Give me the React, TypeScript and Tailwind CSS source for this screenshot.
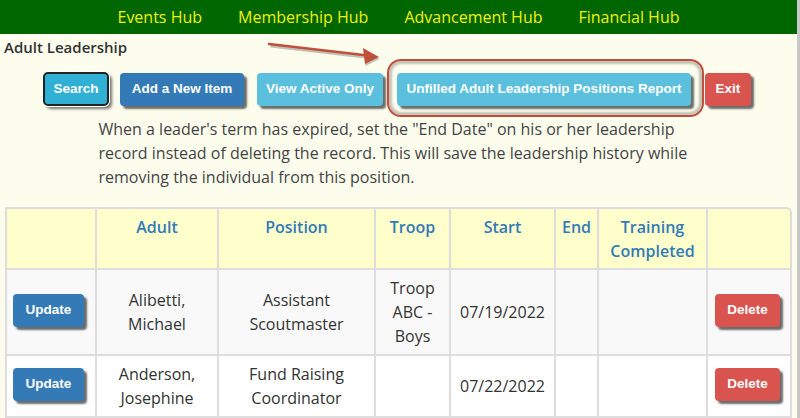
import React from "react";

const font = { fontFamily: '"Open Sans", "Liberation Sans", Arial, sans-serif' };
const btnFont = { fontFamily: '"Liberation Sans", Arial, sans-serif' };

function Btn({ children, className }: { children: React.ReactNode; className: string }) {
  return (
    <button
      style={btnFont}
      className={`h-[33px] shrink-0 rounded-[4px] px-0 text-center text-[13.5px] font-bold text-white shadow-[3px_3px_2px_rgba(60,60,60,0.75)] ${className}`}
    >
      {children}
    </button>
  );
}

const rows = [
  { adult: ["Alibetti,", "Michael"], pos: ["Assistant", "Scoutmaster"], troop: ["Troop", "ABC -", "Boys"], start: "07/19/2022", bg: "bg-[#f9f9f9]" },
  { adult: ["Anderson,", "Josephine"], pos: ["Fund Raising", "Coordinator"], troop: [], start: "07/22/2022", bg: "bg-white" },
];

export default function App() {
  return (
    <div className="flex h-[418px] w-[800px] overflow-hidden bg-[#fdfdee]" style={font}>
      <div className="relative flex w-[797px] flex-col">
        <div className="flex h-[34px] items-center justify-center gap-[36px] bg-[#006600] text-[16px] text-[#f2f200]">
          <span>Events Hub</span>
          <span>Membership Hub</span>
          <span>Advancement Hub</span>
          <span>Financial Hub</span>
        </div>
        <div className="px-[4px] pt-[3px] text-[15px] font-semibold leading-[21px] text-[#333]">Adult Leadership</div>
        <div className="mt-[14px] flex items-center pl-[43px]">
          <button
            style={btnFont}
            className="h-[34px] w-[66px] shrink-0 rounded-[5px] border-2 border-[#222] bg-[#31b0d5] text-[13.5px] font-bold text-white shadow-[0_0_0_1px_#fff,3px_3px_3px_rgba(60,60,60,0.7)]"
          >
            Search
          </button>
          <Btn className="ml-[11px] w-[124px] bg-[#337ab7]">Add a New Item</Btn>
          <Btn className="ml-[13px] w-[126px] bg-[#5bc0de]">View Active Only</Btn>
          <Btn className="ml-[14px] w-[294px] bg-[#5bc0de]">Unfilled Adult Leadership Positions Report</Btn>
          <Btn className="ml-[14px] w-[46px] bg-[#d9534f]">Exit</Btn>
        </div>
        <p className="mx-auto mt-[11px] w-[600px] text-[16px] leading-[24px] text-[#444]">
          When a leader's term has expired, set the "End Date" on his or her leadership record instead of deleting the
          record. This will save the leadership history while removing the individual from this position.
        </p>

        <div className="ml-[5px] mt-[18px] w-[787px]">
          <table className="w-[787px] table-fixed border-separate border-spacing-0 text-[16px] leading-[24px]">
            <colgroup>
              <col className="w-[90px]" />
              <col className="w-[122px]" />
              <col className="w-[157px]" />
              <col className="w-[75px]" />
              <col className="w-[105px]" />
              <col className="w-[43px]" />
              <col className="w-[109px]" />
              <col className="w-[86px]" />
            </colgroup>
            <thead>
              <tr className="bg-[#ffffcc] align-top text-[#337ab7]">
                {["", "Adult", "Position", "Troop", "Start", "End", "Training Completed", ""].map((h, i) => (
                  <th
                    key={i}
                    className={`h-[63px] border-b-2 border-l-2 border-t-2 border-[#ddd] px-[2px] pt-[6px] text-center font-semibold ${
                      i === 7 ? "rounded-tr-[6px] border-r-2" : ""
                    }`}
                  >
                    {h}
                  </th>
                ))}
              </tr>
            </thead>
            <tbody className="text-[#333]">
              {rows.map((r, idx) => (
                <tr key={idx} className={`${r.bg} text-center align-middle`}>
                  <td className={`border-b-2 border-l-2 border-[#ddd] pb-[4px] pl-[6px] text-left ${idx === 0 ? "h-[86px]" : "h-[62px]"}`}>
                    <Btn className="w-[71px] bg-[#337ab7]">Update</Btn>
                  </td>
                  <td className="border-b-2 border-l-2 border-[#ddd] px-[2px]">
                    {r.adult.map((l) => (
                      <div key={l}>{l}</div>
                    ))}
                  </td>
                  <td className="border-b-2 border-l-2 border-[#ddd] px-[2px]">
                    {r.pos.map((l) => (
                      <div key={l}>{l}</div>
                    ))}
                  </td>
                  <td className="border-b-2 border-l-2 border-[#ddd] px-[2px]">
                    {r.troop.map((l) => (
                      <div key={l}>{l}</div>
                    ))}
                  </td>
                  <td className="border-b-2 border-l-2 border-[#ddd] px-[2px]">{r.start}</td>
                  <td className="border-b-2 border-l-2 border-[#ddd]"></td>
                  <td className="border-b-2 border-l-2 border-[#ddd]"></td>
                  <td className="border-b-2 border-l-2 border-r-2 border-[#ddd] pb-[4px] pl-[7px] text-left">
                    <Btn className="w-[65px] bg-[#d9534f]">Delete</Btn>
                  </td>
                </tr>
              ))}
            </tbody>
          </table>
        </div>

        {/* annotation: rounded outline around the report button */}
        <div className="pointer-events-none absolute left-[387px] top-[59px] h-[58px] w-[317px] rounded-[14px] border-2 border-[#c0503a] shadow-[inset_0_0_2px_3px_rgba(150,150,140,0.55)]" />
        {/* annotation: arrow */}
        <svg className="pointer-events-none absolute left-[260px] top-[36px]" width="130" height="36" viewBox="0 0 130 36">
          <g transform="translate(1.5,2)" opacity="0.35">
            <line x1="9" y1="8" x2="112" y2="20" stroke="#555" strokeWidth="3" />
            <polygon points="118,21 102,12 104,28" fill="#555" />
          </g>
          <line x1="9" y1="8" x2="112" y2="20" stroke="#c0503a" strokeWidth="2.5" strokeLinecap="round" />
          <polygon points="119,21 103,12 105,28" fill="#c0503a" />
        </svg>
      </div>
      <div className="w-[3px] bg-[#c8c8c8]" />
    </div>
  );
}
